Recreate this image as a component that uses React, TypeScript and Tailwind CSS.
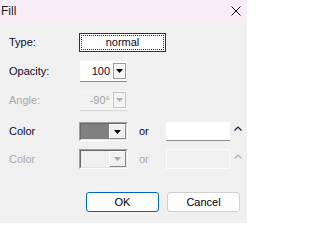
import React from "react";

const font = { fontFamily: '"Liberation Sans", Arial, sans-serif' };

function Arrow({ color = "#000" }: { color?: string }) {
  return (
    <svg viewBox="0 0 7 4" className="w-[7px] h-[4px]">
      <polygon points="0,0 7,0 3.5,4" fill={color} />
    </svg>
  );
}

function Caret({ color }: { color: string }) {
  return (
    <svg viewBox="0 0 8 5" className="w-[8px] h-[5px]">
      <polyline points="0.5,4.5 4,1 7.5,4.5" fill="none" stroke={color} strokeWidth={1.2} />
    </svg>
  );
}

export default function App() {
  return (
    <div className="w-[247px] h-[223px] bg-[#f0f0f0] text-[11px] text-black overflow-hidden" style={font}>
      {/* Title bar */}
      <div className="h-[22px] bg-[#f9edf5] flex items-center justify-between pl-[1px] pr-[6px]">
        <span className="text-[12px] text-[#1a1a1a]">Fill</span>
        <svg viewBox="0 0 10 10" className="w-[10px] h-[10px]">
          <path d="M0.5 0.5L9.5 9.5M9.5 0.5L0.5 9.5" stroke="#111" strokeWidth={1} />
        </svg>
      </div>

      {/* Type */}
      <div className="flex items-center mt-[11px] h-[19px]">
        <span className="w-[79px] pl-[9px] text-[#0a0a28]">Type:</span>
        <div className="w-[87px] h-[19px] bg-white border border-[#303030] p-[1px]">
          <div className="w-full h-full border border-dotted border-[#303030] flex items-center justify-center text-[#0a0a28]">
            normal
          </div>
        </div>
      </div>

      {/* Opacity */}
      <div className="flex items-center mt-[9px] h-[21px]">
        <span className="w-[80px] pl-[9px] text-[#0a0a28]">Opacity:</span>
        <div className="w-[47px] h-[21px] bg-white border-b border-[#8a8a8a] flex items-center">
          <span className="flex-1 text-right pr-[3px] text-[#0a0a28]">100</span>
          <div className="w-[13px] h-[16px] mr-[1px] border border-[#9a9a9a] bg-[#f8f8f8] flex items-center justify-center">
            <Arrow />
          </div>
        </div>
      </div>

      {/* Angle (disabled) */}
      <div className="flex items-center mt-[8px] h-[21px]">
        <span className="w-[80px] pl-[9px] text-[#a8a8a8]">Angle:</span>
        <div className="w-[47px] h-[21px] bg-[#f3f3f3] border-b border-[#d8d8d8] flex items-center">
          <span className="flex-1 text-right pr-[3px] text-[#a0a0a0]">-90°</span>
          <div className="w-[13px] h-[16px] mr-[1px] border border-[#c8c8c8] bg-[#f3f3f3] flex items-center justify-center">
            <Arrow color="#b0b0b0" />
          </div>
        </div>
      </div>

      {/* Color */}
      <div className="flex items-center mt-[11px] h-[19px]">
        <span className="w-[79px] pl-[9px] text-[#0a0a28]">Color</span>
        <div className="w-[49px] h-[19px] border border-t-[#a0a0a0] border-l-[#a0a0a0] border-b-white border-r-white flex">
          <div className="flex-1 flex border border-t-[#696969] border-l-[#696969] border-b-[#e3e3e3] border-r-[#e3e3e3]">
            <div className="w-[28px] bg-[#808080]" />
            <div className="flex-1 border border-t-white border-l-white border-b-[#8a8a8a] border-r-[#8a8a8a] bg-[#f0f0f0] flex items-center justify-center">
              <Arrow />
            </div>
          </div>
        </div>
        <span className="ml-[11px] w-[27px] text-[#0a0a28]">or</span>
        <div className="w-[64px] h-[19px] bg-white border-b border-[#8a8a8a]" />
        <div className="ml-[4px] mb-[6px]">
          <Caret color="#1a1a40" />
        </div>
      </div>

      {/* Color (disabled) */}
      <div className="flex items-center mt-[8px] h-[20px]">
        <span className="w-[79px] pl-[9px] text-[#a8a8a8]">Color</span>
        <div className="w-[49px] h-[20px] border border-t-[#a0a0a0] border-l-[#a0a0a0] border-b-white border-r-white flex">
          <div className="flex-1 flex border border-t-[#696969] border-l-[#696969] border-b-[#e3e3e3] border-r-[#e3e3e3]">
            <div className="w-[28px] bg-[#f0f0f0]" />
            <div className="flex-1 border border-t-white border-l-white border-b-[#8a8a8a] border-r-[#8a8a8a] bg-[#f0f0f0] flex items-center justify-center">
              <Arrow color="#a8a8a8" />
            </div>
          </div>
        </div>
        <span className="ml-[11px] w-[27px] text-[#a8a8a8]">or</span>
        <div className="w-[64px] h-[20px] bg-[#f0f0f0] border border-[#fafafa]" />
        <div className="ml-[4px] mb-[6px]">
          <Caret color="#b0b0b0" />
        </div>
      </div>

      {/* Buttons */}
      <div className="flex mt-[23px] pl-[86px] gap-[8px]">
        <button className="w-[73px] h-[20px] bg-[#fdfdfd] border border-[#0067c0] rounded-[3px] text-[11px] text-black">
          OK
        </button>
        <button className="w-[73px] h-[20px] bg-[#fdfdfd] border border-[#d0d0d0] rounded-[3px] text-[11px] text-black">
          Cancel
        </button>
      </div>
    </div>
  );
}
